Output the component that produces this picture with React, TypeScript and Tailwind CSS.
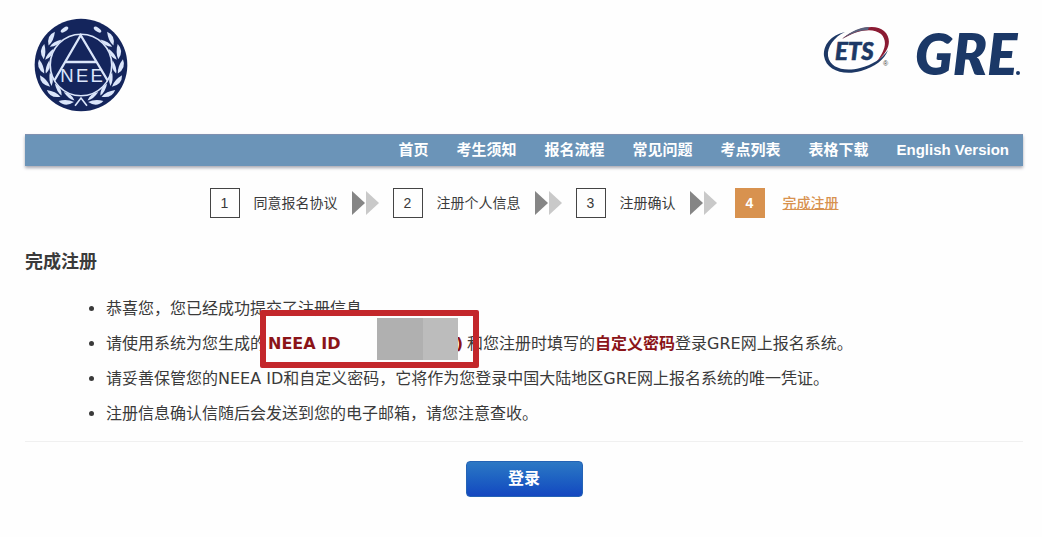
import React from 'react';

const navItems = ['首页', '考生须知', '报名流程', '常见问题', '考点列表', '表格下载', 'English Version'];

const steps = ['同意报名协议', '注册个人信息', '注册确认', '完成注册'];

// Leaf pairs along one side of the wreath, in degrees from the top
const leafAngles = [48, 70, 92, 114, 136, 158];

const WreathSide = () => (
  <g fill="#dbe6fb">
    <ellipse cx="184" cy="62" rx="13" ry="6" transform="rotate(25 184 180) rotate(8 184 62)" />
    {leafAngles.map((angle) => (
      <g key={angle} transform={`rotate(${angle} 184 180)`}>
        <path d="M206 68 Q184 70 162 54 Q188 42 206 68 Z" />
        <path d="M206 73 Q188 70 166 85 Q190 91 206 73 Z" />
      </g>
    ))}
  </g>
);

const NeeaLogo = () => (
  <svg viewBox="42 38 284 284" className="h-[94px] w-[94px]" role="img" aria-label="NEEA">
    <circle cx="184" cy="180" r="140" fill="#14255c" />
    <WreathSide />
    <g transform="translate(368 0) scale(-1 1)">
      <WreathSide />
    </g>
    <path d="M166 303 L184 280 L202 303" fill="none" stroke="#dbe6fb" strokeWidth="5" />
    <circle cx="184" cy="180" r="93" fill="#14255c" stroke="#dbe6fb" strokeWidth="5" />
    <path d="M104 226 L183 90 L264 226 M137 171 H230" fill="none" stroke="#dbe6fb" strokeWidth="7" />
    <g fill="#dbe6fb" fontFamily="Liberation Sans, sans-serif" fontSize="56">
      <text x="121" y="230">N</text>
      <text x="169" y="230">E</text>
      <text x="213" y="230">E</text>
    </g>
  </svg>
);

const EtsLogo = () => (
  <svg viewBox="0 0 68 50" className="h-[50px] w-[68px]" role="img" aria-label="ETS">
    <path d="M22 6 C8 9 0 19 1 30 C3 44 20 50 38 45 C52 41 62 33 65 24 C59 33 49 39 37 42 C21 46 7 42 5 30 C4 21 11 11 22 6 Z" fill="#1d3865" />
    <path d="M19 13 C32 2 52 -3 61 5 C70 13 66 26 54 35 C62 25 65 15 58 8 C50 1 34 4 19 13 Z" fill="#8b1b33" />
    <path d="M19 13 C28 5 38 1 46 1 L45 4 C36 4 27 8 19 13 Z" fill="#59617c" />
    <text x="12" y="34" fill="#1d3865" stroke="#1d3865" strokeWidth="0.6" fontFamily="Lato, sans-serif" fontSize="24" fontWeight="900" fontStyle="italic">ETS</text>
    <text x="60" y="40" fill="#444" fontFamily="Liberation Sans, sans-serif" fontSize="7">®</text>
  </svg>
);

const GreLogo = () => (
  <svg viewBox="0 0 108 72" className="-mt-1.5 h-[72px] w-[108px] overflow-visible" role="img" aria-label="GRE">
    <text x="0" y="55" fill="#1b3867" fontFamily="Lato, sans-serif" fontSize="56" fontWeight="800" fontStyle="italic">GRE</text>
    <circle cx="103" cy="53" r="2" fill="#1b3867" />
  </svg>
);

const StepArrow = () => (
  <svg viewBox="0 0 27 24" className="h-6 w-[27px]" aria-hidden="true">
    <path d="M0 0 L13 12 L0 24 Z" fill="#858585" />
    <path d="M14 0 L27 12 L14 24 Z" fill="#c9c9c9" />
  </svg>
);

// Masked part of the generated ID
const MaskedId = () => (
  <span className="absolute left-[236px] -top-2 flex h-[42px]" aria-hidden="true">
    <span className="w-[35px] bg-[#fefefe]" />
    <span className="w-[46px] bg-[#b0b0b0]" />
    <span className="w-[35px] bg-[#bcbcbc]" />
  </span>
);

export default function App() {
  return (
    <div className="bg-[#fefefe] pl-[25px] pr-[19px] font-['Liberation_Sans','Noto_Sans_CJK_SC',sans-serif] text-[#3a3a3a]">
      <header className="flex h-[134px] items-start justify-between pl-[9px] pt-[18px]">
        <NeeaLogo />
        <div className="flex items-start gap-6 pt-2">
          <EtsLogo />
          <GreLogo />
        </div>
      </header>

      <nav className="flex h-8 items-center justify-end gap-7 border-t border-[#7f90b0] bg-[#6b94b8] pr-3.5 text-[15px] font-bold text-white shadow-[0_2px_3px_#a9a9b3]">
        {navItems.map((item) => (
          <a key={item} href="#" className="whitespace-nowrap">
            {item}
          </a>
        ))}
      </nav>

      <main>
        <ol className="mt-[22px] flex items-center justify-center gap-3.5 text-sm">
          {steps.map((label, i) => {
            const active = i === steps.length - 1;
            return (
              <li key={label} className={`flex items-center ${active ? 'gap-[18px] pl-1' : 'gap-3.5'}`} aria-current={active ? 'step' : undefined}>
                <span
                  className={
                    active
                      ? 'flex size-[30px] items-center justify-center bg-[#d8924f] font-bold text-white'
                      : 'flex size-[30px] items-center justify-center border border-[#444]'
                  }
                >
                  {i + 1}
                </span>
                {active ? (
                  <a href="#" className="font-medium text-[#d8924f] underline">{label}</a>
                ) : (
                  <span>{label}</span>
                )}
                {!active && <StepArrow />}
              </li>
            );
          })}
        </ol>

        <h1 className="mt-[30px] text-lg font-bold">完成注册</h1>

        <ul className="mt-[15px] list-disc border-b border-[#f0f0f0] pb-2.5 pl-[81px] font-['DejaVu_Sans','Noto_Sans_CJK_SC',sans-serif] text-base leading-[35px]">
          <li>恭喜您，您已经成功提交了注册信息</li>
          <li>
            <div className="relative whitespace-nowrap">
              请使用系统为您生成的
              <strong className="inline-block w-[201px] pl-0.5 text-[#8b1418]">
                <span className="flex justify-between">
                  <span>NEEA ID</span>
                  <span className="pr-1">)</span>
                </span>
              </strong>
              和您注册时填写的<strong className="text-[#8b1418]">自定义密码</strong>登录GRE网上报名系统。
              <MaskedId />
              <span className="absolute -top-4 left-[154px] h-[58px] w-[219px] rounded-xs border-6 border-[#c3272b]" aria-hidden="true" />
            </div>
          </li>
          <li>请妥善保管您的NEEA ID和自定义密码，它将作为您登录中国大陆地区GRE网上报名系统的唯一凭证。</li>
          <li>注册信息确认信随后会发送到您的电子邮箱，请您注意查收。</li>
        </ul>

        <div className="flex justify-center pb-10 pt-[19px]">
          <button
            type="button"
            className="h-9 w-[117px] rounded border border-[#2463b5] bg-linear-to-b from-[#2d78c4] to-[#1547c0] text-base font-bold text-white"
          >
            登录
          </button>
        </div>
      </main>
    </div>
  );
}
